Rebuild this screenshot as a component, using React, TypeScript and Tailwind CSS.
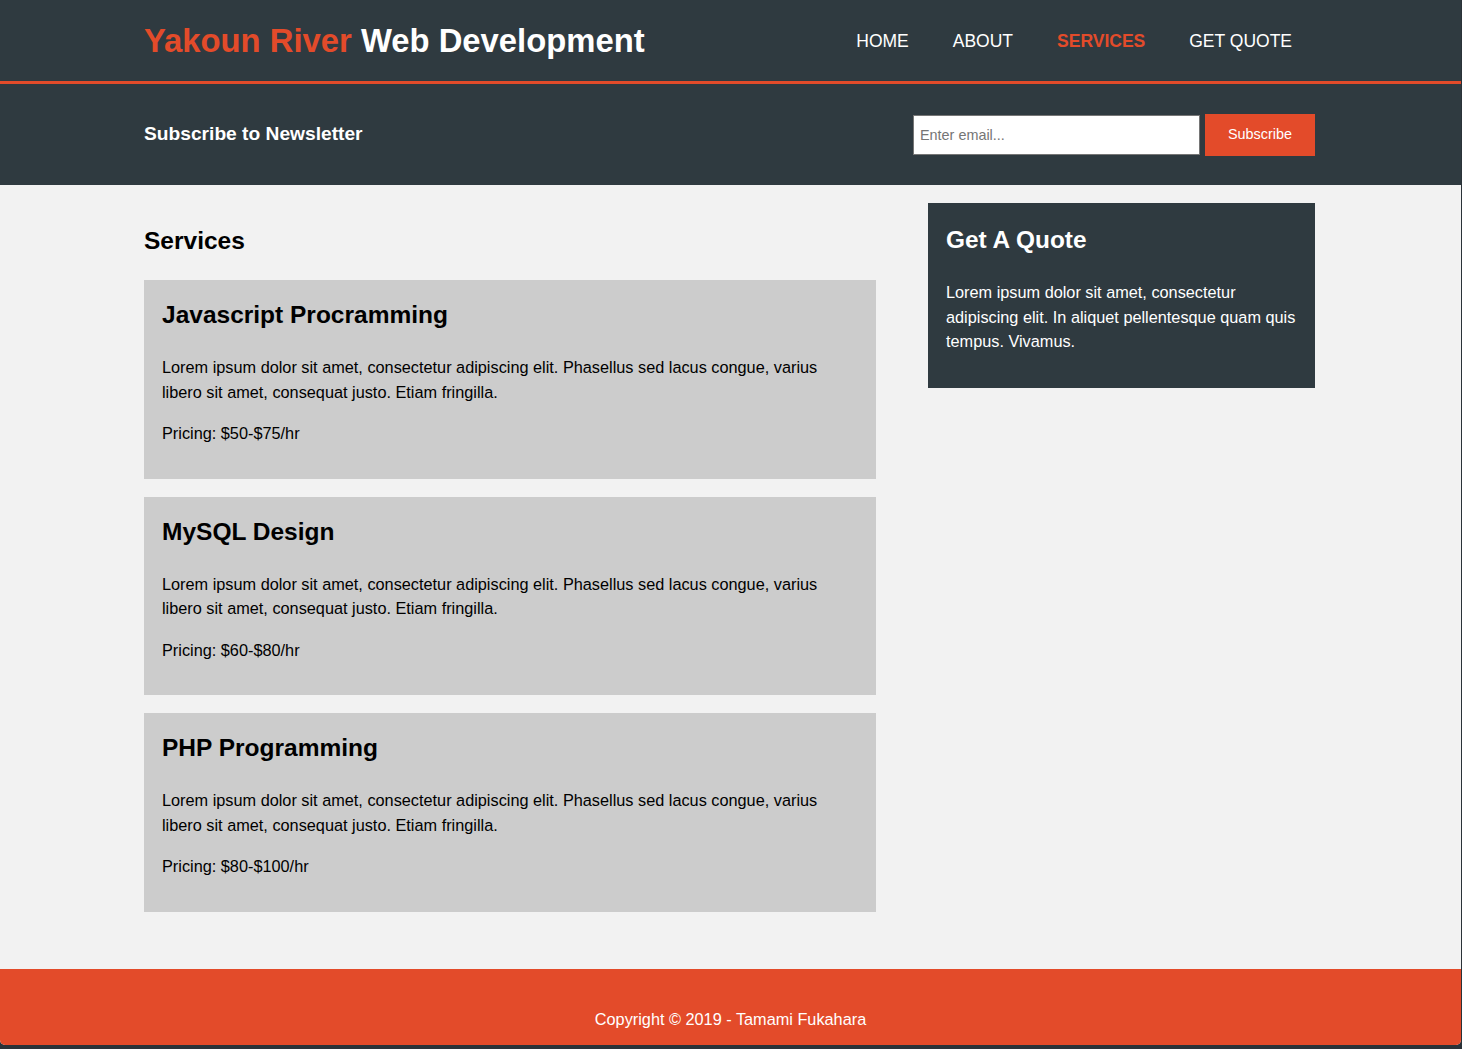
import React from 'react'

interface Service {
  title: string
  pricing: string
}

const services: Service[] = [
  { title: 'Javascript Procramming', pricing: 'Pricing: $50-$75/hr' },
  { title: 'MySQL Design', pricing: 'Pricing: $60-$80/hr' },
  { title: 'PHP Programming', pricing: 'Pricing: $80-$100/hr' },
]

const navItems = ['Home', 'About', 'Services', 'Get Quote']

function ServiceCard({ title, pricing }: Service) {
  return (
    <div className="bg-[#cccccc] px-[18px] pt-[17px] pb-[16px]">
      <h3 className="text-[24.5px] leading-[36px] font-bold mb-[22px]">{title}</h3>
      <p className="mb-[17px]">
        Lorem ipsum dolor sit amet, consectetur adipiscing elit. Phasellus sed lacus congue, varius
        <br />
        libero sit amet, consequat justo. Etiam fringilla.
      </p>
      <p className="mb-[17px]">{pricing}</p>
    </div>
  )
}

export default function App() {
  return (
    <div className="w-[1462px] h-[1049px] bg-[#2a3238] overflow-hidden">
      <div className="w-[1461px] h-[1045px] bg-[#f2f2f2] rounded-b-[5px] overflow-hidden flex flex-col font-['Liberation_Sans',Arial,sans-serif] text-[16.3px] leading-[24.5px] text-black">
        {/* top bar */}
        <header className="bg-[#2f3a40] border-b-[3px] border-[#e34b2a]">
          <div className="ml-[144px] w-[1171px] h-[81px] pt-[2px] flex items-center justify-between">
            <h1 className="text-[32.8px] leading-none font-bold text-white">
              <span className="text-[#e34b2a]">Yakoun River</span> Web Development
            </h1>
            <nav>
              <ul className="flex items-center gap-[44px] pr-[23px] text-[17.5px] uppercase">
                {navItems.map((item) => (
                  <li
                    key={item}
                    className={item === 'Services' ? 'text-[#e34b2a] font-bold' : 'text-white'}
                  >
                    {item}
                  </li>
                ))}
              </ul>
            </nav>
          </div>
        </header>

        {/* newsletter */}
        <section className="bg-[#2f3a40] h-[101px]">
          <div className="ml-[144px] w-[1171px] h-full flex items-center justify-between">
            <h2 className="text-[19.2px] font-bold text-white">Subscribe to Newsletter</h2>
            <form className="flex items-center gap-[5px]" onSubmit={(e) => e.preventDefault()}>
              <input
                type="email"
                placeholder="Enter email..."
                className="w-[287px] h-[40px] bg-white border border-[#767676] px-[6px] text-[14.4px] placeholder:text-[#757575] outline-none"
              />
              <button
                type="submit"
                className="w-[110px] h-[42px] bg-[#e34b2a] text-white text-[14.4px]"
              >
                Subscribe
              </button>
            </form>
          </div>
        </section>

        {/* content */}
        <main className="pt-[18px] pb-[57px]">
          <div className="ml-[144px] w-[1171px] flex items-start justify-between">
            <section className="w-[732px]">
              <h1 className="mt-[20px] mb-[21px] text-[24.5px] leading-[36px] font-bold">Services</h1>
              <div className="flex flex-col gap-[18px]">
                {services.map((s) => (
                  <ServiceCard key={s.title} {...s} />
                ))}
              </div>
            </section>
            <aside className="w-[387px] bg-[#2f3a40] text-white pl-[18px] pr-[12px] pt-[19px] pb-[17px]">
              <h2 className="text-[24.4px] leading-[36px] font-bold mb-[22px]">Get A Quote</h2>
              <p className="mb-[17px]">
                Lorem ipsum dolor sit amet, consectetur adipiscing elit. In aliquet pellentesque quam
                quis tempus. Vivamus.
              </p>
            </aside>
          </div>
        </main>

        <footer className="flex-1 bg-[#e34b2a] text-white text-center pt-[38px]">
          <p>Copyright &copy; 2019 - Tamami Fukahara</p>
        </footer>
      </div>
    </div>
  )
}
